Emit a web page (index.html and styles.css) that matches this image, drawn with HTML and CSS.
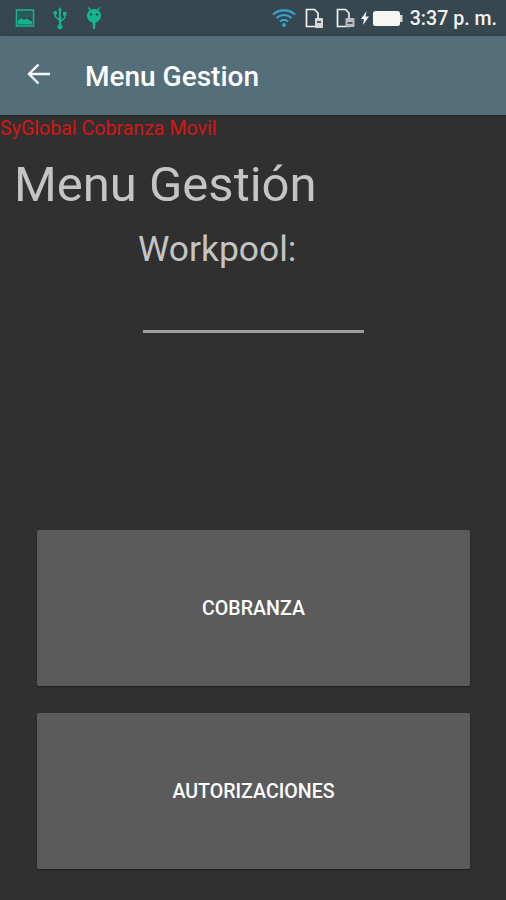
FILE: index.html
```html
<!DOCTYPE html>
<html lang="es">
<head>
<meta charset="utf-8">
<title>Menu Gestion</title>
<link rel="stylesheet" href="styles.css">
</head>
<body>
<div class="screen">
  <header class="status">
    <div class="status-left">
      <svg class="ic" width="20" height="20" viewBox="0 0 20 20"><rect x="1.500" y="2" width="17" height="16" fill="none" stroke="#12b58c" stroke-width="1.600"/><rect x="3" y="3.500" width="14" height="6" fill="#2c5a5c"/><path d="M3 16.500v-4l3-2.500 3 2 2.500-1.500 5.500 3v3z" fill="#12b58c"/></svg>
      <svg class="ic" width="16" height="24" viewBox="0 0 16 24"><path d="M8 1l2.200 3.500H9V14l3.200-2.500V9.500H11V6h3.500v3.500h-1v2.800L9 16v2.200a2.600 2.600 0 1 1-2 0V14.500L2.500 11V8.700a1.900 1.900 0 1 1 1.500 0v1.600L7 12.500V4.500H5.800z" fill="#12b58c"/></svg>
      <svg class="ic" width="18" height="24" viewBox="0 0 18 24"><path d="M3 1.500l2.500 2.500M15 1.500l-2.500 2.500" stroke="#12b58c" stroke-width="1.300"/><path d="M9 3c4 0 7 2.700 7 6.500 0 4-3 6.500-5.500 7l-.5 6.500H8l-.5-6.500C5 16 2 13.500 2 9.500 2 5.700 5 3 9 3z" fill="#12b58c"/><circle cx="6" cy="8.500" r="1.200" fill="#2d4a4c"/><circle cx="12" cy="8.500" r="1.200" fill="#2d4a4c"/></svg>
    </div>
    <div class="status-right">
      <svg class="wifi" width="24" height="20" viewBox="0 0 24 20"><path d="M1 6.500C7 1 17 1 23 6.500M4.500 10C9 6 15 6 19.500 10M8 13.500c2.500-2 5.500-2 8 0" fill="none" stroke="#35a5cf" stroke-width="2.200"/><circle cx="12" cy="17" r="2" fill="#35a5cf"/></svg>
      <svg class="sim" width="19" height="21" viewBox="0 0 19 21"><path d="M1.500 1.500h8L13 5v13.500H1.500z" fill="none" stroke="#f0f0f0" stroke-width="1.700"/><rect x="10" y="10" width="8" height="10" rx="1" fill="#d8d8d8"/><rect x="12" y="13" width="4" height="2" fill="#4a5a60"/></svg>
      <svg class="sim sim-two" width="19" height="21" viewBox="0 0 19 21"><path d="M1.500 1.500h8L13 5v13.500H1.500z" fill="none" stroke="#f0f0f0" stroke-width="1.700"/><rect x="9.500" y="10" width="9" height="9" rx="1" fill="#b8bcbc"/><rect x="11.500" y="14" width="5" height="2" fill="#4a5a60"/></svg>
      <svg class="bolt" width="10" height="16" viewBox="0 0 10 14"><path d="M6.500 0L1 8h3l-1 6 6-8.500H5.500z" fill="#f4f4f4"/></svg>
      <svg class="battery" width="30" height="17" viewBox="0 0 30 17"><rect x="0" y="1" width="27" height="15" rx="2.500" fill="#f6f6f2"/><rect x="27" y="5" width="2.500" height="7" fill="#d8d8d4"/></svg>
      <span class="clock">3:37 p. m.</span>
    </div>
  </header>
  <nav class="appbar">
    <svg class="back" width="26" height="24" viewBox="0 0 26 24"><path d="M24 12H3M12.500 2.500L3 12l9.500 9.500" fill="none" stroke="#f4f7f8" stroke-width="2.400"/></svg>
    <span class="appbar-title">Menu Gestion</span>
  </nav>
  <main class="content">
    <p class="brand">SyGlobal Cobranza Movil</p>
    <h1 class="heading">Menu Gestión</h1>
    <p class="workpool">Workpool:</p>
    <div class="field"></div>
    <div class="actions">
      <button class="action">COBRANZA</button>
      <button class="action">AUTORIZACIONES</button>
    </div>
  </main>
</div>
</body>
</html>
```
FILE: styles.css
```css
* { box-sizing: border-box; }
html, body { margin: 0; padding: 0; }
body { width: 506px; height: 900px; overflow: hidden; background: #303030; font-family: Roboto, sans-serif; }
.screen { display: flex; flex-direction: column; height: 900px; }
.status { height: 36px; background: #37474f; display: flex; justify-content: space-between; align-items: center; padding: 0 9px 0 15px; }
.status-left { display: flex; align-items: center; gap: 17px; }
.status-left .ic { display: block; }
.status-right { display: flex; align-items: center; }
.status-right svg { display: block; }
.wifi { margin-right: 9px; }
.sim-two { margin-left: 12px; }
.bolt { margin-left: 5px; margin-right: 3px; }
.battery { margin-right: 7px; }
.clock { color: #f2f2f2; font-size: 19.600px; font-weight: 500; white-space: nowrap; }
.appbar { height: 79px; background: #546e7a; display: flex; align-items: center; padding: 0 0 0 26px; gap: 33px; box-shadow: 0 1px 3px rgba(0,0,0,.35); }
.back { display: block; margin-bottom: 4px; }
.appbar-title { color: #fff; font-size: 28px; font-weight: 500; position: relative; top: 1px; }
.content { flex: 1; display: flex; flex-direction: column; min-height: 0; }
.brand { margin: 4px 0 0; color: #d51616; font-size: 19.600px; line-height: 20px; height: 20px; }
.heading { margin: 18px 0 0 14px; color: #c4c4c4; font-size: 49px; font-weight: 400; line-height: 56px; }
.workpool { margin: 16px 0 0 138px; color: #c4c4c4; font-size: 35.400px; line-height: 40px; }
.field { width: 221px; height: 3px; background: #9e9e9e; margin: 61px 0 0 143px; }
.actions { margin: 197px 0 0 37px; display: flex; flex-direction: column; gap: 27px; width: 433px; }
.action { height: 156px; border: 0; border-radius: 2px; background: #5b5b5b; color: #fff; font-family: Roboto, sans-serif; font-size: 19.600px; font-weight: 500; box-shadow: 0 1px 2px rgba(0,0,0,.4); padding: 0; }
```
